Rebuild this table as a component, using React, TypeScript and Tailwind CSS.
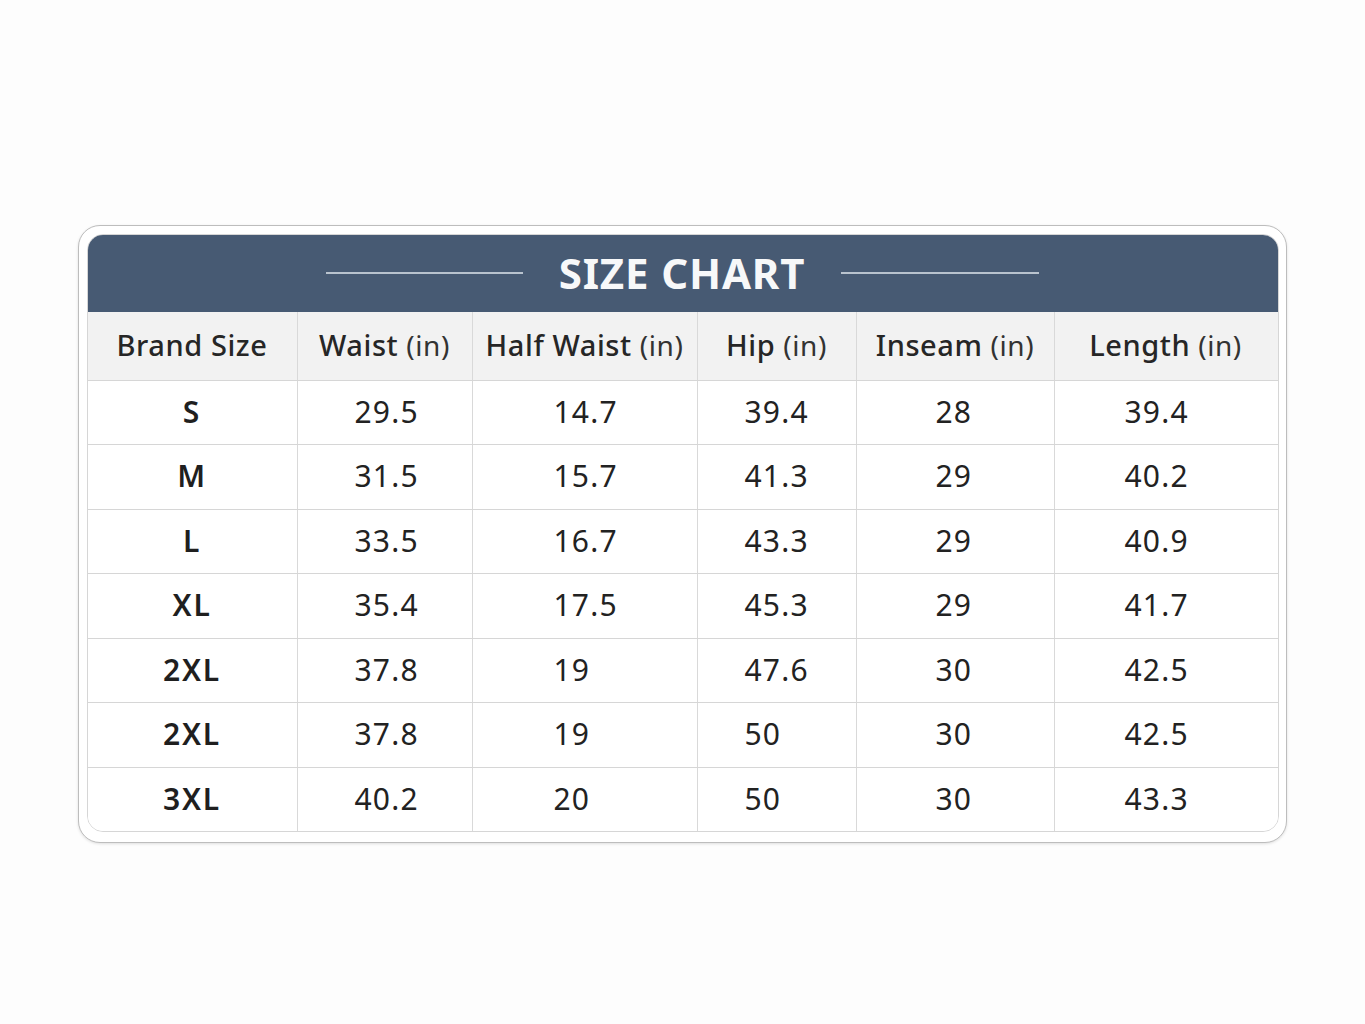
import React from 'react';

const COLS = [
  { label: 'Brand Size', unit: '' },
  { label: 'Waist', unit: '(in)' },
  { label: 'Half Waist', unit: '(in)' },
  { label: 'Hip', unit: '(in)' },
  { label: 'Inseam', unit: '(in)' },
  { label: 'Length', unit: '(in)' },
];

const ROWS = [
  ['S', '29.5', '14.7', '39.4', '28', '39.4'],
  ['M', '31.5', '15.7', '41.3', '29', '40.2'],
  ['L', '33.5', '16.7', '43.3', '29', '40.9'],
  ['XL', '35.4', '17.5', '45.3', '29', '41.7'],
  ['2XL', '37.8', '19', '47.6', '30', '42.5'],
  ['2XL', '37.8', '19', '50', '30', '42.5'],
  ['3XL', '40.2', '20', '50', '30', '43.3'],
];

// value cells are left aligned at a fixed indent per column
const PAD = ['', 'pl-[57px]', 'pl-[81px]', 'pl-[47px]', 'pl-[79px]', 'pl-[70px]'];

const GRID = 'grid grid-cols-[209px_175px_225px_159px_198px_223px]';

const App: React.FC = () => {
  return (
    <div className="min-h-screen bg-[#fdfdfd] pt-[225px] font-['Noto_Sans',sans-serif] text-[#222]">
      <div className="mx-auto w-[1209px] rounded-[22px] border-[1.5px] border-[#bdbdbd] bg-white px-[7.5px] pt-[7.5px] pb-[9.5px] shadow-[0_1px_3px_rgba(0,0,0,0.12)]">
        <div className="overflow-hidden rounded-[16px] border border-[#d6d6d6]">
          {/* Title band */}
          <div className="flex h-[77px] items-center justify-center gap-9 bg-[#475a73]">
            <span className="h-[2px] w-[197px] bg-[#b9c3ce]" />
            <h1 className="text-[42px] font-bold leading-none tracking-[0.02em] text-[#f7f8f9]">SIZE CHART</h1>
            <span className="h-[2px] w-[198px] bg-[#b9c3ce]" />
          </div>

          {/* Header row */}
          <div className={`${GRID} h-[68px] bg-[#f2f2f2]`}>
            {COLS.map((c, i) => (
              <div
                key={c.label}
                className={`flex items-center justify-center pb-[2px] text-[29px] font-medium tracking-[0.02em] text-[#262626] ${i > 0 ? 'border-l border-[#d9d9d9]' : ''}`}
              >
                {c.label}
                {c.unit && <span className="ml-[8px] text-[28px] font-normal text-[#333]">{c.unit}</span>}
              </div>
            ))}
          </div>

          {/* Body rows */}
          {ROWS.map((r, ri) => (
            <div key={ri} className={`${GRID} h-[64.5px] border-t border-[#d6d6d6] bg-white`}>
              {r.map((v, i) => (
                <div
                  key={i}
                  className={
                    i === 0
                      ? 'flex items-center justify-center pb-[2px] text-[30px] font-semibold tracking-[0.06em] text-[#1f1f1f]'
                      : `flex items-center border-l border-[#d9d9d9] pb-[2px] text-[30px] tracking-[0.04em] ${PAD[i]}`
                  }
                >
                  {v}
                </div>
              ))}
            </div>
          ))}
        </div>
      </div>
    </div>
  );
};

export default App;
